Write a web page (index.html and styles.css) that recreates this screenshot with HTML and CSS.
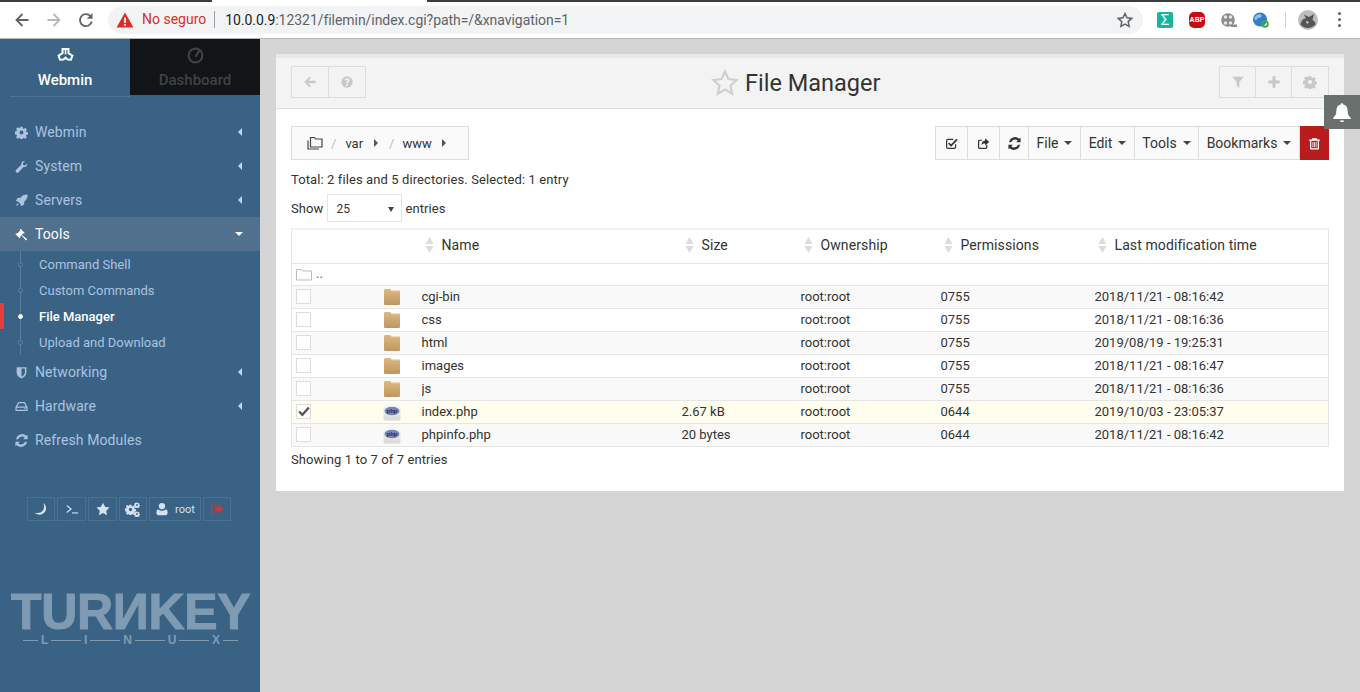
FILE: index.html
```html
<html>
  <head>
    <title>File Manager</title>
    <meta name="viewport" content="width=device-width, initial-scale=1.0">
    <link rel="stylesheet" href="styles.css">
  </head>
  <body>
    <svg class="defs" width="0" height="0">
      <defs>
        <linearGradient id="tan" x1="0" y1="0" x2="0" y2="1"><stop offset="0" stop-color="#dcb980"/><stop offset="1" stop-color="#c09660"/></linearGradient>
        <linearGradient id="tile" x1="0" y1="0" x2="0" y2="1"><stop offset="0" stop-color="#fbfbfb"/><stop offset="1" stop-color="#d8d8d8"/></linearGradient>
        <symbol id="cog" viewBox="0 0 16 16"><path fill-rule="evenodd" d="M6.600 1h2.800l.4 2 1.200.5 1.700-1.100 2 2-1.100 1.700.5 1.200 2 .4v2.800l-2 .4-.5 1.200 1.100 1.700-2 2-1.700-1.100-1.200.5-.4 2H6.600l-.4-2-1.200-.5-1.700 1.100-2-2 1.100-1.700-.5-1.200-2-.4V6.700l2-.4.5-1.200-1.100-1.700 2-2 1.700 1.100 1.200-.5zM8 5.600a2.400 2.400 0 1 0 0 4.800 2.400 2.400 0 0 0 0-4.800z"/></symbol>
        <symbol id="wrench" viewBox="0 0 16 16"><path d="M15 4.200c.5 2.400-1.500 5-4.400 4.500L4.400 15c-1 1-2.400.9-3.100 0-.8-.8-.7-2 .2-2.900l6.200-6.200C7.200 3 9.800.7 12.300 1.300L9.700 4l.5 2.200 2.200.6z"/></symbol>
        <symbol id="rocket" viewBox="0 0 16 16"><path d="M15.500.5c.2 3.800-1.200 6.700-4 8.800l-.4 3.600L7.300 15l-.5-2.600-3.200-3.200L1 8.700l2.100-3.800 3.600-.4C8.800 1.700 11.700.3 15.500.5zM3 11.500l1.500 1.500L1 15z"/></symbol>
        <symbol id="gavel" viewBox="0 0 16 16"><path d="M6.800 1 12 6.200l-1 1-.9-.6L8.300 8.400 15 13.800 13.500 15.500 7.900 9l-1.800 1.800.6.900-1 1L.5 7.500l1-1 .9.600 4.300-4.300-.9-.8z"/></symbol>
        <symbol id="shield" viewBox="0 0 16 16"><path fill-rule="evenodd" d="M2 1.500h12V8c0 3.500-3 6-6 7.500C5 14 2 11.500 2 8zM8 3v10.300c2-1.100 4.200-3 4.200-5.300V3z"/></symbol>
        <symbol id="hdd" viewBox="0 0 16 16"><path fill-rule="evenodd" d="M4 2.500h8l3.500 6.500v4.500H.5V9zM4.800 4 2.800 8h10.400l-2-4zM2 9.500V12h12V9.500zm9 .7h2v1h-2z"/></symbol>
        <symbol id="refresh" viewBox="0 0 16 16"><path d="M13.800 2.200 15.500 1v5.500H10l2-1.900A5 5 0 0 0 3.800 6.500H1.300A7.500 7.500 0 0 1 13.800 2.200zM2.200 13.800.5 15V9.500H6l-2 1.900a5 5 0 0 0 8.200-1.900h2.500A7.500 7.500 0 0 1 2.200 13.800z"/></symbol>
        <symbol id="moon" viewBox="0 0 16 16"><path d="M10.500.8c3.300 2.400 4.300 6.700 2.300 10.100C10.800 14.200 6.500 15.500 3 13.700c-.8-.4-1.500-1-2-1.500 4.200 1 8-.2 9.600-3.300 1.300-2.500 1.200-5.500-.1-8.100z"/></symbol>
        <symbol id="star" viewBox="0 0 16 16"><path d="m8 .8 2.300 4.700 5.200.8-3.800 3.600.9 5.200L8 12.700l-4.600 2.400.9-5.200L.5 6.300l5.200-.8z"/></symbol>
        <symbol id="user" viewBox="0 0 16 16"><path d="M8 1a3.600 3.600 0 1 1 0 7.200A3.600 3.600 0 0 1 8 1zM3.500 8.300C4.700 9.400 6.200 10 8 10s3.300-.6 4.500-1.700c1.400.5 1.900 2 1.900 4.200 0 1.500-1 2.500-2.400 2.500H4c-1.400 0-2.400-1-2.400-2.500 0-2.200.5-3.700 1.900-4.200z"/></symbol>
        <symbol id="signout" viewBox="0 0 16 16"><path d="M6 2.500H2.800C1.500 2.500 1 3 1 4.200v7.600c0 1.200.5 1.700 1.800 1.700H6V12.300H2.500V3.700H6zM9.500 2.500 15.500 8l-6 5.500v-3H5v-5h4.500z"/></symbol>
        <symbol id="sort" viewBox="0 0 9 16"><path d="M4.500 0 8.500 7H.5zM4.500 16 .5 9h8z"/></symbol>
        <symbol id="folder" viewBox="0 0 18 18"><path fill="url(#tan)" d="M1 2.500C1 1.600 1.600 1 2.500 1h4c.8 0 1.200.5 1.500 1h7.500c1 0 1.500.6 1.500 1.500v12c0 1-.6 1.500-1.500 1.500h-13C1.600 17 1 16.500 1 15.500z"/><path fill="#eeddc0" d="M8 2h8.500v1.200H8.500z"/></symbol>
        <symbol id="php" viewBox="0 0 18 18"><rect x=".5" y=".5" width="17" height="17" rx="2.500" fill="url(#tile)"/><ellipse cx="9" cy="8" rx="7.500" ry="4.200" fill="#7385bd"/><text x="9" y="9.800" text-anchor="middle" font-family="Liberation Sans" font-size="6" font-weight="700" fill="#26315a">php</text></symbol>
      </defs>
    </svg>

    <div class="chrome">
      <div class="chrome-row">
        <svg class="nav-ico" viewBox="0 0 16 16"><path d="M14.500 8H2.500M8.500 2 2.500 8l6 6" fill="none" stroke="#5f6368" stroke-width="1.800"/></svg>
        <svg class="nav-ico" viewBox="0 0 16 16"><path d="M1.500 8h12M7.500 2l6 6-6 6" fill="none" stroke="#b5b8bb" stroke-width="1.800"/></svg>
        <svg class="nav-ico" viewBox="0 0 16 16"><path d="M13.800 9.500A6 6 0 1 1 12.300 4" fill="none" stroke="#5f6368" stroke-width="1.800"/><path d="M14.500 1v5.700H8.800z" fill="#5f6368"/></svg>
        <div class="omnibox">
          <svg class="warn" viewBox="0 0 18 16"><path d="M9 .5 17.500 15.500H.5z" fill="#d93025"/><path d="M8.200 5.500h1.600V11H8.200zM8.200 12h1.600v1.700H8.200z" fill="#fff"/></svg>
          <span class="not-secure">No seguro</span>
          <span class="url"><b>10.0.0.9</b>:12321/filemin/index.cgi?path=/&amp;xnavigation=1</span>
          <svg class="omni-star" viewBox="0 0 16 16"><path d="m8 1.500 2 4.300 4.700.6-3.500 3.200.9 4.700L8 12l-4.100 2.300.9-4.700-3.500-3.200L6 5.800z" fill="none" stroke="#5f6368" stroke-width="1.500"/></svg>
        </div>
        <div class="ext-list">
          <span class="ext ext-sigma">Σ</span>
          <span class="ext ext-abp">ABP</span>
          <svg class="ext" viewBox="0 0 16 16"><circle cx="7" cy="8" r="6.800" fill="#8c8c8c"/><circle cx="4.500" cy="5" r="1.700" fill="#e8e8e8"/><circle cx="9.500" cy="5" r="1.700" fill="#e8e8e8"/><circle cx="4.500" cy="11" r="1.700" fill="#e8e8e8"/><circle cx="9.500" cy="11" r="1.700" fill="#e8e8e8"/><path d="M10 12.500h6V15h-6z" fill="#8c8c8c"/></svg>
          <svg class="ext" viewBox="0 0 16 16"><circle cx="7" cy="7.500" r="7" fill="#2f7fc9"/><path d="M2.500 4c2-2 5-2 6-1s-1 3-3 3-1 3-3 2-1-3 0-4z" fill="#8fc0ea"/><circle cx="12" cy="12" r="2.800" fill="none" stroke="#4aa83c" stroke-width="2"/></svg>
          <span class="ext-sep"></span>
          <svg class="avatar" viewBox="0 0 20 20"><circle cx="10" cy="10" r="10" fill="#bdbdbd"/><path d="M2.500 14c1-4 3-6 5.500-5.500L6 4.500l5 2.500 5-3-1.500 6c2 1 3 2.500 3 4.500-4 4.500-11.500 4.500-15 0z" fill="#555"/><path d="M8 11l3 1-2 2z" fill="#ddd"/></svg>
          <span class="kebab"><i></i><i></i><i></i></span>
        </div>
      </div>
    </div>

    <div class="page">
      <aside class="sidebar">
        <div class="side-tabs">
          <div class="side-tab side-tab-on">
            <svg class="tab-ico" viewBox="0 0 16 16"><path d="M5.200 1.800h5.600v4l3.700 2.400-1.400 3.800-3.100-.2L8 10l-2 1.800-3.100.2-1.400-3.800 3.700-2.400z" fill="none" stroke="#fff" stroke-width="1.900"/><path d="M8 2v5" stroke="#fff" stroke-width="1.500"/></svg>
            <span>Webmin</span>
          </div>
          <div class="side-tab side-tab-off">
            <svg class="tab-ico" viewBox="0 0 16 16"><circle cx="8" cy="8" r="6.500" fill="none" stroke="#3f4345" stroke-width="2"/><path d="M8 9l4-6" stroke="#3f4345" stroke-width="2"/></svg>
            <span>Dashboard</span>
          </div>
        </div>

        <nav class="menu">
          <a class="menu-item"><svg class="ico"><use href="#cog"/></svg>Webmin<span class="caret-left"></span></a>
          <a class="menu-item"><svg class="ico"><use href="#wrench"/></svg>System<span class="caret-left"></span></a>
          <a class="menu-item"><svg class="ico"><use href="#rocket"/></svg>Servers<span class="caret-left"></span></a>
          <a class="menu-item menu-open"><svg class="ico"><use href="#gavel"/></svg>Tools<span class="caret-down"></span></a>
          <div class="submenu">
            <a class="sub-item">Command Shell</a>
            <a class="sub-item">Custom Commands</a>
            <a class="sub-item sub-on">File Manager</a>
            <a class="sub-item">Upload and Download</a>
          </div>
          <a class="menu-item"><svg class="ico"><use href="#shield"/></svg>Networking<span class="caret-left"></span></a>
          <a class="menu-item"><svg class="ico"><use href="#hdd"/></svg>Hardware<span class="caret-left"></span></a>
          <a class="menu-item"><svg class="ico"><use href="#refresh"/></svg>Refresh Modules</a>
        </nav>

        <div class="side-btns">
          <a class="side-btn"><svg class="ico-sm"><use href="#moon"/></svg></a>
          <a class="side-btn side-wide"><svg class="ico-sm" viewBox="0 0 16 16"><path d="m2 4 5 4-5 4" fill="none" stroke="currentColor" stroke-width="1.300"/><path d="M8 12.500h7" stroke="currentColor" stroke-width="1.300"/></svg></a>
          <a class="side-btn side-wide"><svg class="ico-sm"><use href="#star"/></svg></a>
          <a class="side-btn side-cogs"><svg class="cog-big"><use href="#cog"/></svg><svg class="cog-small"><use href="#cog"/></svg><svg class="cog-small cog-low"><use href="#cog"/></svg></a>
          <a class="side-btn side-user"><svg class="ico-sm"><use href="#user"/></svg>root</a>
          <a class="side-btn side-out"><svg class="ico-sm"><use href="#signout"/></svg></a>
        </div>

        <div class="logo">
          <div class="logo-name">TURИKEY</div>
          <div class="logo-sub"><i></i><span>L</span><i></i><span>I</span><i></i><span>N</span><i></i><span>U</span><i></i><span>X</span><i></i></div>
        </div>
      </aside>

      <main class="main">
        <div class="notify"><svg viewBox="0 0 16 16"><path d="M8 1c.7 0 1 .4 1 1 2.400.5 3.500 2.300 3.500 5 0 3 1 4.300 2.500 5.500v1H1v-1C2.500 11.300 3.500 10 3.500 7c0-2.700 1.100-4.500 3.500-5 0-.6.300-1 1-1zM6.300 14.800h3.400C9.500 15.600 8.800 16 8 16s-1.500-.4-1.700-1.200z"/></svg></div>
        <section class="card">
          <header class="card-head">
            <div class="btn-group">
              <a class="head-btn"><svg viewBox="0 0 16 16"><path d="M7.500 2 9 3.500 6 6.500h8.500v3H6l3 3L7.500 14 1.500 8z"/></svg></a>
              <a class="head-btn"><svg viewBox="0 0 16 16"><path fill-rule="evenodd" d="M8 1.500a6.500 6.500 0 1 1 0 13 6.500 6.500 0 0 1 0-13zM7 10.500v2h2v-2zM8 3.700C6.500 3.700 5.400 4.500 5.200 6l1.800.4C7.100 5.700 7.400 5.400 8 5.400s.9.300.9.700c0 .9-1.900 1.100-1.900 3.400h2c0-1.400 2-1.700 2-3.600C11 4.500 9.600 3.700 8 3.700z"/></svg></a>
            </div>
            <h1 class="title"><svg class="title-star" viewBox="0 0 28 28"><path d="m14 2.500 3.400 7.600 8.100.9-6 5.600 1.700 8.200L14 20.600 6.800 24.800l1.700-8.200-6-5.600 8.100-.9z" fill="none" stroke="#cfcfcf" stroke-width="2.200"/></svg>File Manager</h1>
            <div class="btn-group btn-group-right">
              <a class="head-btn"><svg viewBox="0 0 16 16"><path d="M1.500 2h13L9.500 8v6.500l-3-2V8z"/></svg></a>
              <a class="head-btn"><svg viewBox="0 0 16 16"><path d="M6.300 1.500h3.400v4.800h4.800v3.400H9.700v4.800H6.300V9.700H1.500V6.300h4.800z"/></svg></a>
              <a class="head-btn"><svg><use href="#cog"/></svg></a>
            </div>
          </header>

          <div class="card-body">
            <div class="tools-row">
              <div class="crumbs">
                <svg class="crumb-home" viewBox="0 0 16 14"><path d="M3.500 3V1.500h4l1 1.500h6.500v8H3.500zM1 4.500V13h11" fill="none" stroke="#444" stroke-width="1.200"/></svg>
                <span class="crumb-sep">/</span>
                <span class="crumb">var</span><span class="caret-right"></span>
                <span class="crumb-sep">/</span>
                <span class="crumb">www</span><span class="caret-right"></span>
              </div>
              <div class="toolbar">
                <a class="tool tool-ico w32"><svg viewBox="0 0 16 16"><path d="M13 9v3.500c0 .8-.5 1.500-1.500 1.500h-8C2.500 14 2 13.300 2 12.500v-8C2 3.500 2.500 3 3.500 3H10" fill="none" stroke="#333" stroke-width="1.500"/><path d="m4.500 7.500 3 3L14.800 3" fill="none" stroke="#333" stroke-width="2.200"/></svg></a>
                <a class="tool tool-ico w32"><svg viewBox="0 0 16 16"><path d="M12 9.500V13c0 .6-.4 1-1 1H3c-.6 0-1-.4-1-1V5c0-.6.400-1 1-1h3.500" fill="none" stroke="#333" stroke-width="1.500"/><path d="M10 1.500 15 6l-5 4.500V8C7.500 8 6 8.800 5.500 10.500 5.500 7 7 4.500 10 4.200z" fill="#333"/></svg></a>
                <a class="tool tool-ico w29"><svg><use href="#refresh"/></svg></a>
                <a class="tool w52">File<span class="caret"></span></a>
                <a class="tool w54">Edit<span class="caret"></span></a>
                <a class="tool w64">Tools<span class="caret"></span></a>
                <a class="tool w101">Bookmarks<span class="caret"></span></a>
                <a class="tool tool-del"><svg viewBox="0 0 16 16"><path fill="#fff" fill-rule="evenodd" d="M5.500 1.500h5l1 1.500h3v1.500h-1V14c0 .8-.5 1.300-1.300 1.300H3.800C3 15.300 2.500 14.800 2.500 14V4.500h-1V3h3zM4 4.500v9.300h8V4.500zM5.500 6h1v6.500h-1zm2 0h1v6.500h-1zm2 0h1v6.500h-1z"/></svg></a>
              </div>
            </div>

            <p class="total">Total: 2 files and 5 directories. Selected: 1 entry</p>
            <div class="show-row">
              Show
              <span class="fake-select">25<span class="select-arrow"></span></span>
              entries
            </div>

            <table class="files">
              <thead>
                <tr>
                  <th class="c-check"></th>
                  <th class="c-icon"></th>
                  <th class="c-name"><svg class="sort"><use href="#sort"/></svg>Name</th>
                  <th class="c-size"><svg class="sort"><use href="#sort"/></svg>Size</th>
                  <th class="c-own"><svg class="sort"><use href="#sort"/></svg>Ownership</th>
                  <th class="c-perm"><svg class="sort"><use href="#sort"/></svg>Permissions</th>
                  <th class="c-date"><svg class="sort"><use href="#sort"/></svg>Last modification time</th>
                </tr>
              </thead>
              <tbody>
                <tr>
                  <td colspan="7" class="up-cell"><svg class="up-ico" viewBox="0 0 16 13"><path d="M.5 12V1.500h5l1 1.500h9v9z" fill="#fff" stroke="#bbb"/></svg>..</td>
                </tr>
                <tr>
                  <td><span class="check"></span></td><td><svg class="file-ico"><use href="#folder"/></svg></td><td>cgi-bin</td><td></td><td>root:root</td><td>0755</td><td>2018/11/21 - 08:16:42</td>
                </tr>
                <tr>
                  <td><span class="check"></span></td><td><svg class="file-ico"><use href="#folder"/></svg></td><td>css</td><td></td><td>root:root</td><td>0755</td><td>2018/11/21 - 08:16:36</td>
                </tr>
                <tr>
                  <td><span class="check"></span></td><td><svg class="file-ico"><use href="#folder"/></svg></td><td>html</td><td></td><td>root:root</td><td>0755</td><td>2019/08/19 - 19:25:31</td>
                </tr>
                <tr>
                  <td><span class="check"></span></td><td><svg class="file-ico"><use href="#folder"/></svg></td><td>images</td><td></td><td>root:root</td><td>0755</td><td>2018/11/21 - 08:16:47</td>
                </tr>
                <tr>
                  <td><span class="check"></span></td><td><svg class="file-ico"><use href="#folder"/></svg></td><td>js</td><td></td><td>root:root</td><td>0755</td><td>2018/11/21 - 08:16:36</td>
                </tr>
                <tr class="picked">
                  <td><span class="check"><svg viewBox="0 0 16 16"><path d="m2 8 4 4 8-9" fill="none" stroke="#555" stroke-width="3"/></svg></span></td><td><svg class="file-ico"><use href="#php"/></svg></td><td>index.php</td><td>2.67 kB</td><td>root:root</td><td>0644</td><td>2019/10/03 - 23:05:37</td>
                </tr>
                <tr>
                  <td><span class="check"></span></td><td><svg class="file-ico"><use href="#php"/></svg></td><td>phpinfo.php</td><td>20 bytes</td><td>root:root</td><td>0644</td><td>2018/11/21 - 08:16:42</td>
                </tr>
              </tbody>
            </table>
            <p class="showing">Showing 1 to 7 of 7 entries</p>
          </div>
        </section>
      </main>
    </div>
  </body>
</html>
```

FILE: styles.css
```css
html, body {
  margin: 0;
  height: 100%;
  overflow: hidden;
}

body {
  font-family: Roboto, "Liberation Sans", sans-serif;
  font-size: 13px;
  color: #333;
  display: flex;
  flex-direction: column;
}

a {
  color: inherit;
  text-decoration: none;
}

.defs {
  position: absolute;
}

/* browser bar */
.chrome {
  height: 39px;
  flex: none;
  box-sizing: border-box;
  border-bottom: 1px solid #b5b5b5;
  background: linear-gradient(to right, #3c3c3c 212px, #fff 212px, #fff 427px, #3c3c3c 427px) top / 100% 2px no-repeat #fff;
}

.chrome-row {
  display: flex;
  align-items: center;
  height: 38px;
  padding: 1px 0 0 14px;
  box-sizing: border-box;
}

.nav-ico {
  width: 16px;
  height: 16px;
  margin-right: 16px;
  flex: none;
}

.omnibox {
  width: 1035px;
  height: 28px;
  margin-left: -2px;
  flex: none;
  display: flex;
  align-items: center;
  background: #f1f3f4;
  border-radius: 14px;
  font-size: 14px;
  box-sizing: border-box;
  padding: 0 10px 0 8px;
}

.warn {
  width: 18px;
  height: 16px;
}

.not-secure {
  color: #d93025;
  margin-left: 8px;
  padding-right: 8px;
  border-right: 1px solid #9aa0a6;
  line-height: 17px;
}

.url {
  margin-left: 10px;
  color: #5f6368;
  letter-spacing: -.05px;
}

.url b {
  font-weight: 400;
  color: #202124;
}

.omni-star {
  width: 16px;
  height: 16px;
  margin-left: auto;
}

.ext-list {
  display: flex;
  align-items: center;
  margin-left: 14px;
  flex: 1;
}

.ext {
  width: 16px;
  height: 16px;
  margin-right: 16px;
  flex: none;
}

.ext-sigma {
  background: #12b89e;
  color: #fff;
  border-radius: 2px;
  font-size: 15px;
  line-height: 16px;
  text-align: center;
}

.ext-abp {
  background: #c70d0d;
  color: #fff;
  border-radius: 5px;
  font: 700 7px/16px "Liberation Sans", sans-serif;
  text-align: center;
}

.ext-sep {
  width: 1px;
  height: 16px;
  background: #d0d0d0;
  margin-right: 12px;
}

.avatar {
  width: 20px;
  height: 20px;
  margin-right: 20px;
}

.kebab {
  display: flex;
  flex-direction: column;
  gap: 3px;
}

.kebab i {
  width: 3px;
  height: 3px;
  border-radius: 50%;
  background: #5f6368;
}

/* page */
.page {
  flex: 1;
  display: flex;
  min-height: 0;
}

.sidebar {
  width: 260px;
  flex: none;
  background: #3a6285;
  color: #abc2e0;
  display: flex;
  flex-direction: column;
}

.side-tabs {
  display: flex;
  height: 57px;
  box-sizing: border-box;
  flex: none;
}

.side-tab {
  width: 130px;
  display: flex;
  flex-direction: column;
  align-items: center;
  font-size: 15px;
  font-weight: 500;
  padding-top: 8px;
}

.side-tab-on {
  color: #fff;
  border-bottom: 1px solid #4f7595;
  margin-left: 10px;
  width: 120px;
  padding-right: 10px;
  box-sizing: border-box;
  height: 58px;
}

.side-tab-off {
  background: #111517;
  color: #3f4345;
  height: 56px;
  box-sizing: border-box;
}

.tab-ico {
  width: 17px;
  height: 17px;
  margin-bottom: 7px;
}

.menu {
  margin-top: 19px;
  display: flex;
  flex-direction: column;
}

.menu-item {
  height: 34px;
  display: flex;
  align-items: center;
  padding-left: 15px;
  font-size: 14px;
  letter-spacing: .1px;
  position: relative;
}

.ico {
  width: 13px;
  height: 13px;
  margin-right: 7px;
  fill: currentColor;
  flex: none;
}

.menu-open {
  background: #50708e;
  color: #fff;
}

.caret-left {
  margin-left: auto;
  margin-right: 18px;
  border: 4px solid transparent;
  border-left: 0;
  border-right-color: #c5d4e8;
}

.caret-down {
  margin-left: auto;
  margin-right: 17px;
  border: 4px solid transparent;
  border-bottom: 0;
  border-top-color: #fff;
}

.submenu {
  height: 104px;
  background: linear-gradient(#5a7d9b, #5a7d9b) 20px 0 / 1px 100% no-repeat;
}

.sub-item {
  height: 26px;
  display: flex;
  align-items: center;
  padding-left: 39px;
  position: relative;
  font-size: 13px;
}

.sub-item::before {
  content: "";
  position: absolute;
  left: 18px;
  top: 11px;
  width: 3px;
  height: 3px;
  border: 1px solid #5f8199;
  border-radius: 50%;
  background: #3a6285;
}

.sub-on {
  color: #fff;
  font-weight: 500;
}

.sub-on::before {
  background: #fff;
  border-color: #fff;
}

.sub-on::after {
  content: "";
  position: absolute;
  left: 0;
  top: 0;
  width: 4px;
  height: 26px;
  background: #e53e3e;
}

.side-btns {
  display: flex;
  gap: 2px;
  margin: 40px 0 0 27px;
  height: 24px;
}

.side-btn {
  width: 26px;
  border: 1px solid #4b7092;
  display: flex;
  align-items: center;
  justify-content: center;
  color: #d5e0f0;
  position: relative;
}

.side-wide {
  width: 27px;
}

.ico-sm {
  width: 14px;
  height: 14px;
  fill: currentColor;
}

.cog-big {
  width: 11px;
  height: 11px;
  fill: currentColor;
  margin: 1px 6px 0 0;
}

.cog-small {
  width: 6px;
  height: 6px;
  fill: currentColor;
  position: absolute;
  right: 6px;
  top: 4px;
}

.cog-low {
  top: 13px;
}

.side-user {
  width: 50px;
  gap: 6px;
  font-size: 11px;
}

.side-out {
  color: #c23b3b;
}

.logo {
  margin: 70px 0 0 11px;
  width: 239px;
  color: #7f9bb4;
}

.logo-name {
  font: 700 50px/42px "Liberation Sans", sans-serif;
  -webkit-text-stroke: 1px #7f9bb4;
  letter-spacing: -.3px;
  white-space: nowrap;
}

.logo-sub {
  display: flex;
  align-items: center;
  gap: 3px;
  margin: 1px 12px 0 12px;
  font: 700 12px/12px "Liberation Sans", sans-serif;
}

.logo-sub i {
  flex: 2;
  height: 1px;
  background: #7f9bb4;
}

.logo-sub i:first-child,
.logo-sub i:last-child {
  flex: 1;
}

/* card */
.main {
  flex: 1;
  background: #d5d5d5;
  padding: 15px 16px 0;
  position: relative;
  min-width: 0;
}

.notify {
  position: absolute;
  top: 56px;
  right: 0;
  width: 36px;
  height: 34px;
  background: #6a706e;
  display: flex;
  align-items: center;
  justify-content: center;
}

.notify svg {
  width: 20px;
  height: 20px;
  fill: #fff;
}

.card {
  background: #fff;
  border-top: 4px solid #e8e8e8;
  height: 437px;
  box-sizing: border-box;
}

.card-head {
  height: 51px;
  box-sizing: border-box;
  background: #f3f3f3;
  border-bottom: 1px solid #ddd;
  padding: 8px 15px 0;
  display: flex;
  justify-content: space-between;
  align-items: flex-start;
}

.btn-group {
  display: flex;
}

.head-btn {
  width: 38px;
  height: 32px;
  box-sizing: border-box;
  border: 1px solid #ddd;
  margin-left: -1px;
  display: flex;
  align-items: center;
  justify-content: center;
}

.head-btn:first-child {
  margin-left: 0;
}

.btn-group-right .head-btn {
  width: 37px;
}

.btn-group-right .head-btn:last-child {
  width: 38px;
}

.head-btn svg {
  width: 14px;
  height: 14px;
  fill: #c8c8c8;
}

.title {
  margin: 0;
  font-size: 23.5px;
  font-weight: 400;
  line-height: 34px;
  display: flex;
  align-items: center;
  gap: 6px;
  position: absolute;
  left: 451px;
  top: 27px;
  color: #333;
}

.title-star {
  width: 28px;
  height: 28px;
}

.card-body {
  padding: 17px 15px 0;
}

.tools-row {
  display: flex;
  justify-content: space-between;
  height: 34px;
}

.crumbs {
  width: 178px;
  box-sizing: border-box;
  border: 1px solid #ddd;
  background: #fafafa;
  display: flex;
  align-items: center;
  padding-left: 15px;
}

.crumb-home {
  width: 16px;
  height: 14px;
}

.crumb-sep {
  color: #bbb;
  margin: 0 9px 0 8px;
}

.crumb-sep ~ .crumb-sep {
  margin: 0 8px 0 11px;
}

.crumb {
  color: #333;
}

.caret-right {
  margin-left: 11px;
  border: 4px solid transparent;
  border-right: 0;
  border-left-color: #555;
}

.crumb ~ .crumb + .caret-right {
  margin-left: 10px;
}

.toolbar {
  display: flex;
  border: 1px solid #ddd;
  border-right: 0;
  background: #fafafa;
  box-sizing: border-box;
  font-size: 14px;
}

.tool {
  display: flex;
  align-items: center;
  justify-content: center;
  border-right: 1px solid #ddd;
  box-sizing: border-box;
  gap: 6px;
}

.tool-ico svg {
  width: 13px;
  height: 13px;
  fill: #333;
}

.w32 { width: 32px; }
.w29 { width: 29px; }
.w52 { width: 52px; }
.w54 { width: 54px; }
.w64 { width: 64px; }
.w101 { width: 101px; }

.caret {
  border: 4px solid transparent;
  border-bottom: 0;
  border-top-color: #444;
}

.tool-del {
  width: 29px;
  background: #b91c1c;
  margin: -1px 0;
  border: 0;
}

.tool-del svg {
  width: 13px;
  height: 13px;
}

.total {
  margin: 12px 0 0;
  line-height: 15px;
  letter-spacing: .1px;
}

.show-row {
  display: flex;
  align-items: center;
  gap: 4px;
  margin-top: 7px;
  height: 28px;
  letter-spacing: .1px;
}

.fake-select {
  width: 75px;
  height: 28px;
  box-sizing: border-box;
  border: 1px solid #e5e5e5;
  margin-right: -1px;
  padding: 2px 6px 0 8px;
  font-size: 12px;
  line-height: 24px;
  display: flex;
  align-items: center;
  justify-content: space-between;
}

.select-arrow {
  border: 3px solid transparent;
  border-bottom: 0;
  border-top: 5px solid #444;
  margin-right: 1px;
}

.files {
  width: 1038px;
  margin-top: 6px;
  border-collapse: collapse;
  table-layout: fixed;
  border-left: 1px solid #e5e5e5;
  border-right: 1px solid #e5e5e5;
}

.files th {
  height: 34px;
  padding: 0 0 3px;
  box-sizing: border-box;
  font-size: 14px;
  font-weight: 400;
  letter-spacing: .1px;
  text-align: left;
  border-top: 2px solid #f1f1f1;
  border-bottom: 1px solid #e5e5e5;
  white-space: nowrap;
}

.c-check { width: 90px; }
.c-icon { width: 40px; }
.c-name { width: 260px; }
.c-size { width: 119px; }
.c-own { width: 140px; }
.c-perm { width: 154px; }

.sort {
  width: 9px;
  height: 16px;
  fill: #dcdcdc;
  margin: 0 8px 0 3px;
  vertical-align: -3px;
}

.files td {
  height: 22px;
  padding: 0;
  font-size: 13px;
  border-bottom: 1px solid #e5e5e5;
  line-height: 22px;
  overflow: hidden;
}

.files tbody tr:nth-child(even) {
  background: #f9f9f9;
}

.files tbody tr.picked {
  background: #fffded;
}

.files td:first-child {
  padding-left: 4px;
}

.files td.up-cell {
  color: #555;
  line-height: 18px;
}

.up-ico {
  width: 16px;
  height: 13px;
  margin-right: 4px;
  vertical-align: -3px;
}

.check {
  display: block;
  width: 15px;
  height: 15px;
  box-sizing: border-box;
  border: 1px solid #ddd;
  background: #fff;
}

.check svg {
  display: block;
  width: 14px;
  height: 13px;
}

.file-ico {
  display: block;
  width: 18px;
  height: 18px;
  margin-left: 1px;
}

.showing {
  margin: 5px 0 0;
  line-height: 15px;
  letter-spacing: .1px;
}
```
